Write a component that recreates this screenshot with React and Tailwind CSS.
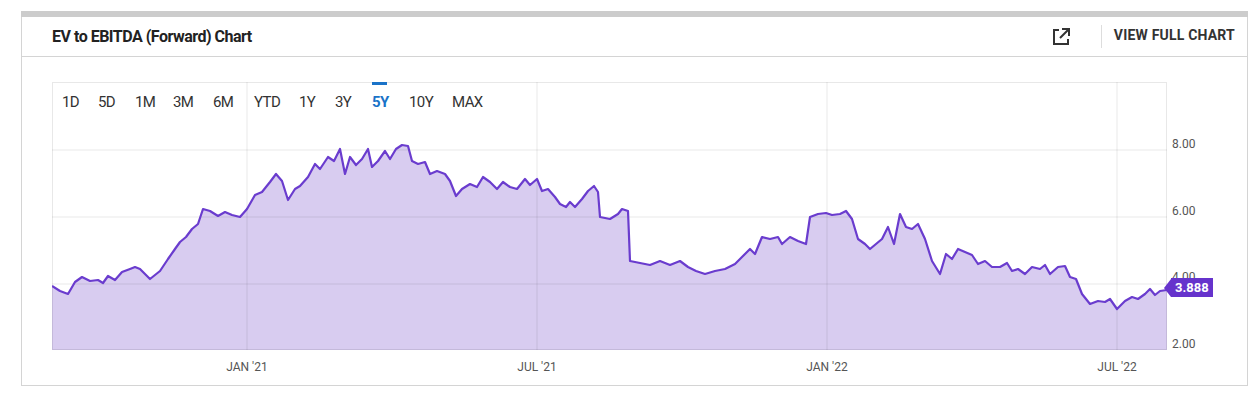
const pts = "52,287 60,292 68,295 75,283 82,278 90,282 98,281 103,284 108,277 115,281 122,273 130,270 135,268 140,270 150,280 160,272 168,260 175,250 180,243 186,238 192,230 198,225 203,210 210,212 218,217 225,213 232,216 240,218 247,210 255,196 262,193 270,183 276,175 282,182 288,201 295,190 300,187 308,178 315,165 320,170 328,158 334,162 340,150 345,175 350,158 356,166 362,160 368,150 372,168 378,162 385,152 390,160 396,150 402,146 408,147 412,162 418,165 425,163 430,175 437,172 445,175 450,182 456,197 462,190 470,185 477,188 483,178 490,183 497,190 503,183 510,188 517,190 525,180 530,186 537,180 542,192 548,190 555,198 560,205 566,208 570,203 575,208 582,200 588,192 594,187 598,193 600,218 610,220 618,215 622,210 628,212 630,262 640,264 650,266 660,262 670,266 680,262 688,268 696,272 705,275 715,272 725,270 735,265 742,258 750,250 755,255 762,238 770,240 778,238 782,245 790,238 798,242 806,245 810,218 818,215 826,214 832,216 840,215 846,212 852,220 858,240 865,245 870,250 876,245 882,240 888,228 894,245 900,215 906,228 912,230 918,225 925,240 932,262 940,275 946,255 952,260 958,250 965,253 972,256 978,265 985,262 992,268 1000,268 1007,264 1012,272 1018,270 1025,275 1032,268 1040,270 1045,266 1050,275 1058,268 1065,267 1070,278 1076,280 1082,295 1090,305 1098,302 1105,303 1110,300 1117,310 1125,302 1132,298 1138,300 1145,295 1150,290 1155,296 1160,292 1167,291";

const ranges = [["1D", 62], ["5D", 98], ["1M", 135], ["3M", 173], ["6M", 213], ["YTD", 254], ["1Y", 299], ["3Y", 335], ["5Y", 372], ["10Y", 409], ["MAX", 452]];
const font = { fontFamily: "Roboto, 'Liberation Sans', sans-serif" };

export default function App() {
  return (
    <div className="w-[1260px] h-[407px] bg-white pt-[11px] pl-[21px]" style={font}>
      <div className="w-[1227px] border-t-[6px] border-[#cccccc]">
        <div className="border-x border-b border-[#d4d4d4] h-[369px]">
          <div className="h-[40px] border-b border-[#d4d4d4] flex items-center pl-[30px] pr-[12px]">
            <div className="text-[16px] font-bold text-[#222] tracking-[-0.5px] flex-1">EV to EBITDA (Forward) Chart</div>
            <svg width="20" height="20" viewBox="0 0 20 20" fill="none" stroke="#333" strokeWidth="2" className="mr-[30px]">
              <path d="M8 3H3v14h14v-5" />
              <path d="M11 2h7v7M18 2l-9 9" />
            </svg>
            <div className="h-[23px] border-l border-[#ddd] pl-[12px] text-[14px] font-bold text-[#333] tracking-[0.2px]">VIEW FULL CHART</div>
          </div>
          <div className="relative mt-[25px] ml-[30px] w-[1190px] h-[300px]">
            <svg width="1115" height="268" viewBox="52 83 1115 268" className="block">
              <polygon points={`52,351 ${pts} 1167,351`} fill="#d8ccf0" />
              <rect x="52.5" y="83.5" width="1114" height="267" fill="none" stroke="rgba(0,0,0,0.09)" />
              {[151, 218, 285].map(y => <line key={y} x1="52" x2="1167" y1={y} y2={y} stroke="rgba(0,0,0,0.09)" />)}
              {[247, 537, 827, 1117].map(x => <line key={x} x1={x} x2={x} y1="83" y2="351" stroke="rgba(0,0,0,0.09)" />)}
              <polyline points={pts} fill="none" stroke="#6a3cce" strokeWidth="2.2" strokeLinejoin="round" />
            </svg>
            {ranges.map(([r, x]) => (
              <div key={r} className={"absolute top-0 flex flex-col items-start text-[15px] " + (r === "5Y" ? "text-[#1a73c8] font-bold" : "text-[#333]")} style={{ left: x - 52 }}>
                <div className={"h-[3px] w-[15px] " + (r === "5Y" ? "bg-[#1a73c8]" : "")} />
                <div className="mt-[6px] tracking-[-0.6px] whitespace-nowrap">{r}</div>
              </div>
            ))}
            {[["8.00", 53], ["6.00", 120], ["4.00", 186], ["2.00", 253]].map(([t, y]) => (
              <div key={t} className="absolute left-[1120px] text-[12px] text-[#555]" style={{ top: y }}>{t}</div>
            ))}
            <div className="absolute left-[1112px] top-[196px] flex items-center">
              <div className="w-0 h-0 border-y-[9px] border-y-transparent border-r-[7px] border-r-[#6633cc]" />
              <div className="bg-[#6633cc] text-white text-[13px] font-bold h-[19px] leading-[19px] px-[4px]">3.888</div>
            </div>
            {[["JAN '21", 195], ["JUL '21", 485], ["JAN '22", 775], ["JUL '22", 1065]].map(([t, x]) => (
              <div key={t} className="absolute top-[276px] w-[60px] -ml-[30px] text-center whitespace-nowrap text-[12px] text-[#555]" style={{ left: x }}>{t}</div>
            ))}
          </div>
        </div>
      </div>
    </div>
  );
}
